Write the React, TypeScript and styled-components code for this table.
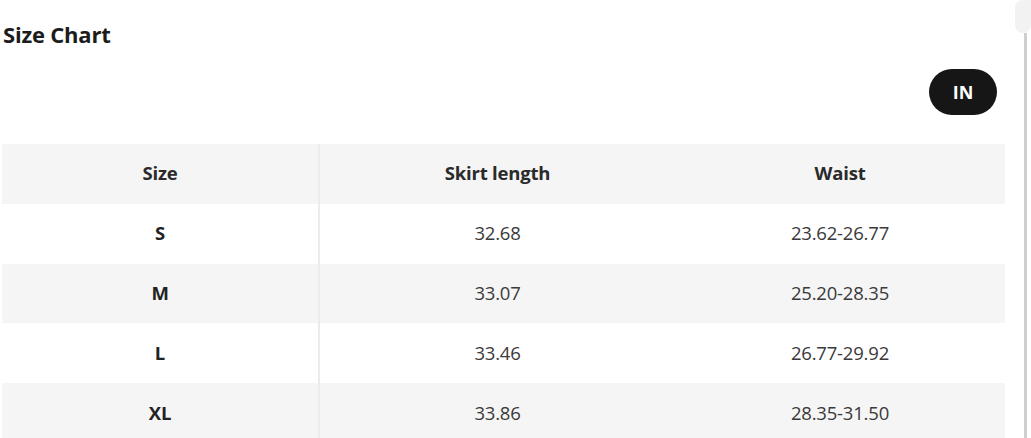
import styled, { createGlobalStyle } from 'styled-components';

const GlobalStyle = createGlobalStyle`
  html, body {
    margin: 0;
    padding: 0;
    background: #fff;
    font-family: 'Open Sans', 'Noto Sans', Arial, sans-serif;
    color: #222;
  }
`;

interface SizeRow {
  size: string;
  length: string;
  waist: string;
}

const rows: SizeRow[] = [
  { size: 'S', length: '32.68', waist: '23.62-26.77' },
  { size: 'M', length: '33.07', waist: '25.20-28.35' },
  { size: 'L', length: '33.46', waist: '26.77-29.92' },
  { size: 'XL', length: '33.86', waist: '28.35-31.50' },
];

const Page = styled.div`
  display: flex;
  width: 1031px;
  height: 438px;
  overflow: hidden;
`;

const Main = styled.div`
  width: 1005px;
  padding-left: 2px;
  box-sizing: border-box;
  display: flex;
  flex-direction: column;
`;

const Title = styled.h2`
  margin: 19px 0 0 1px;
  font-size: 22px;
  line-height: 30px;
  font-weight: 700;
  color: #1c1c1c;
  letter-spacing: -0.2px;
`;

const Toolbar = styled.div`
  display: flex;
  justify-content: flex-end;
  padding-right: 8px;
  margin-top: 20px;
`;

const UnitButton = styled.button`
  width: 68px;
  height: 46px;
  border: none;
  border-radius: 23px;
  background: #161616;
  color: #fff;
  font-family: inherit;
  font-size: 18px;
  font-weight: 700;
  cursor: pointer;
`;

const Table = styled.div`
  margin-top: 29px;
  display: grid;
  grid-template-columns: 318px 355px 1fr;
  grid-auto-rows: 59.8px;
`;

const Cell = styled.div<{ $shaded: boolean; $head?: boolean; $divider?: boolean }>`
  display: flex;
  align-items: center;
  justify-content: center;
  padding-bottom: 2px;
  background: ${({ $shaded }) => ($shaded ? '#f5f5f5' : '#fff')};
  border-right: ${({ $divider }) => ($divider ? '2px solid #ececec' : 'none')};
  font-size: 18.5px;
  font-weight: ${({ $head }) => ($head ? 700 : 400)};
  color: ${({ $head }) => ($head ? '#2a2a2a' : '#3a3a3a')};
  letter-spacing: -0.2px;
`;

const SizeCell = styled(Cell)`
  font-weight: 700;
  color: #222;
`;

const Scrollbar = styled.div`
  flex: 1;
  display: flex;
  flex-direction: column;
  align-items: flex-end;
`;

const Thumb = styled.div`
  width: 16px;
  height: 33px;
  background: #f2f2f2;
  border-radius: 8px 0 8px 8px;
`;

const Track = styled.div`
  flex: 1;
  width: 3px;
  margin-right: 4px;
  background: #cfcfcf;
`;

function App() {
  return (
    <>
      <GlobalStyle />
      <Page>
        <Main>
          <Title>Size Chart</Title>
          <Toolbar>
            <UnitButton>IN</UnitButton>
          </Toolbar>
          <Table>
            <Cell $shaded $head $divider>Size</Cell>
            <Cell $shaded $head>Skirt length</Cell>
            <Cell $shaded $head>Waist</Cell>
            {rows.map((row, i) => {
              const shaded = i % 2 === 1;
              return [
                <SizeCell key={row.size + '-s'} $shaded={shaded} $divider>{row.size}</SizeCell>,
                <Cell key={row.size + '-l'} $shaded={shaded}>{row.length}</Cell>,
                <Cell key={row.size + '-w'} $shaded={shaded}>{row.waist}</Cell>,
              ];
            })}
          </Table>
        </Main>
        <Scrollbar>
          <Thumb />
          <Track />
        </Scrollbar>
      </Page>
    </>
  );
}

export default App;
